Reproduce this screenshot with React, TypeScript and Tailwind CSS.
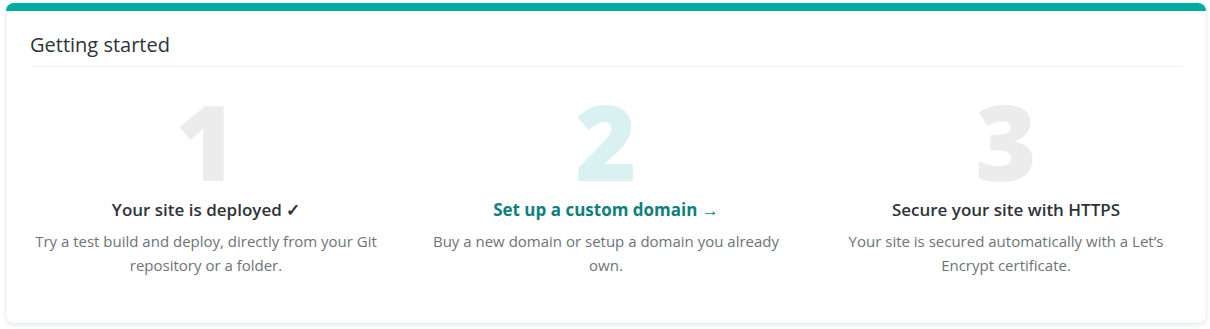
const steps = [
  {
    n: "1",
    numColor: "text-[#ececec]",
    title: "Your site is deployed ✓",
    titleClass: "text-[#2e3338] font-semibold",
    text: "Try a test build and deploy, directly from your Git repository or a folder.",
  },
  {
    n: "2",
    numColor: "text-[#d9f2f1]",
    title: "Set up a custom domain →",
    titleClass: "text-[#0e807d] font-bold",
    text: "Buy a new domain or setup a domain you already own.",
  },
  {
    n: "3",
    numColor: "text-[#ececec]",
    title: "Secure your site with HTTPS",
    titleClass: "text-[#2e3338] font-semibold",
    text: "Your site is secured automatically with a Let’s Encrypt certificate.",
  },
];

export default function App() {
  return (
    <div
      className="min-h-[329px] bg-white pt-[3px] px-[6px]"
      style={{ fontFamily: '"Open Sans", "Noto Sans", sans-serif' }}
    >
      <div className="w-[1200px] rounded-lg border-t-8 border-[#00ad9f] bg-white shadow-[0_0_0_1px_rgba(230,238,238,0.6),0_2px_4px_rgba(200,215,215,0.5)]">
        <div className="px-6 pt-5">
          <h2 className="border-b border-[#f2f3f3] pb-[7px] text-[20px] leading-7 text-[#2e3338]">
            Getting started
          </h2>
        </div>
        <div className="grid grid-cols-3 pt-[34px] pb-[46px]">
          {steps.map((s) => (
            <div key={s.n} className="flex flex-col items-center px-6 text-center">
              <div className={`h-[80px] text-[105px] font-extrabold leading-[80px] ${s.numColor}`}>
                {s.n}
              </div>
              <h3 className={`mt-[17px] text-[17px] leading-6 ${s.titleClass}`}>{s.title}</h3>
              <p className="mt-[7px] max-w-[360px] text-[15px] leading-6 text-[#6e7378]">
                {s.text}
              </p>
            </div>
          ))}
        </div>
      </div>
    </div>
  );
}
